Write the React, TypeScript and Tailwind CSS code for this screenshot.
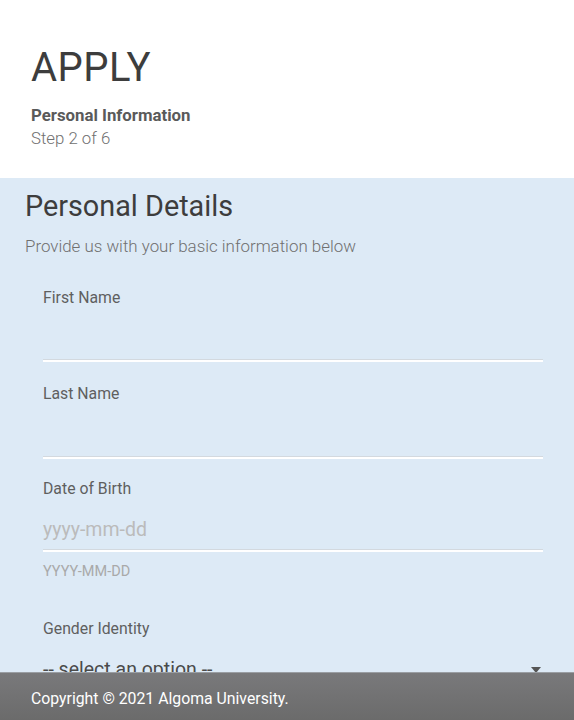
import React from 'react';

const font = { fontFamily: 'Roboto, "Noto Sans", sans-serif' };

const Underline: React.FC = () => (
  <div className="h-[3px] border-t border-[#d3d9df] bg-white" />
);

export default function App() {
  return (
    <div className="min-h-screen bg-white text-[#444]" style={font}>
      {/* Header */}
      <div className="px-[31px] pt-[44px] h-[178px]">
        <h1 className="text-[40px] leading-[48px] text-[#3d3d3d] tracking-[0.5px]">APPLY</h1>
        <p className="mt-[12px] text-[16.8px] leading-[23px] font-bold text-[#5a5a5a]">Personal Information</p>
        <p className="text-[16.8px] leading-[23px] font-light text-[#707070]">Step 2 of 6</p>
      </div>

      {/* Form panel */}
      <div className="bg-[#ddeaf6] px-[25px] pt-[10px] pb-[120px]">
        <h2 className="text-[28.8px] leading-[36px] text-[#3d3d3d]">Personal Details</h2>
        <p className="mt-[12px] text-[16.9px] leading-[20px] font-light text-[#707070]">
          Provide us with your basic information below
        </p>

        <div className="pl-[18px] pr-[6px] mt-[32px]">
          <div>
            <label className="block text-[15.8px] leading-[20px] text-[#5f5f5f]">First Name</label>
            <div className="h-[51px]" />
            <Underline />
          </div>

          <div className="pt-[22px]">
            <label className="block text-[15.8px] leading-[20px] text-[#5f5f5f]">Last Name</label>
            <div className="h-[52px]" />
            <Underline />
          </div>

          <div className="pt-[20px]">
            <label className="block text-[15.8px] leading-[20px] text-[#5f5f5f]">Date of Birth</label>
            <div className="h-[50px] flex items-end pb-[7px]">
              <span className="text-[19.5px] leading-[24px] text-[#bbbbbb]">yyyy-mm-dd</span>
            </div>
            <Underline />
            <p className="mt-[10px] text-[14.5px] leading-[20px] text-[#a9a9a9]">YYYY-MM-DD</p>
          </div>

          <div className="pt-[37px]">
            <label className="block text-[15.8px] leading-[20px] text-[#5f5f5f]">Gender Identity</label>
            <div className="mt-[19px] h-[30px] flex items-start justify-between">
              <span className="text-[19.5px] leading-[24px] text-[#4a4a4a]">-- select an option --</span>
              <span className="mr-[2px] mt-[9px] w-0 h-0 border-l-[5px] border-r-[5px] border-t-[6px] border-l-transparent border-r-transparent border-t-[#555]" />
            </div>
            <Underline />
          </div>
        </div>
      </div>

      {/* Footer */}
      <div className="fixed bottom-0 left-0 right-0 h-[48px] bg-gradient-to-b from-[#79797b] to-[#6b6b6b] border-t border-[#9a9ea3] flex items-center pt-[4px] px-[31px]">
        <span className="text-[15.8px] text-white">Copyright © 2021 Algoma University.</span>
      </div>
    </div>
  );
}
